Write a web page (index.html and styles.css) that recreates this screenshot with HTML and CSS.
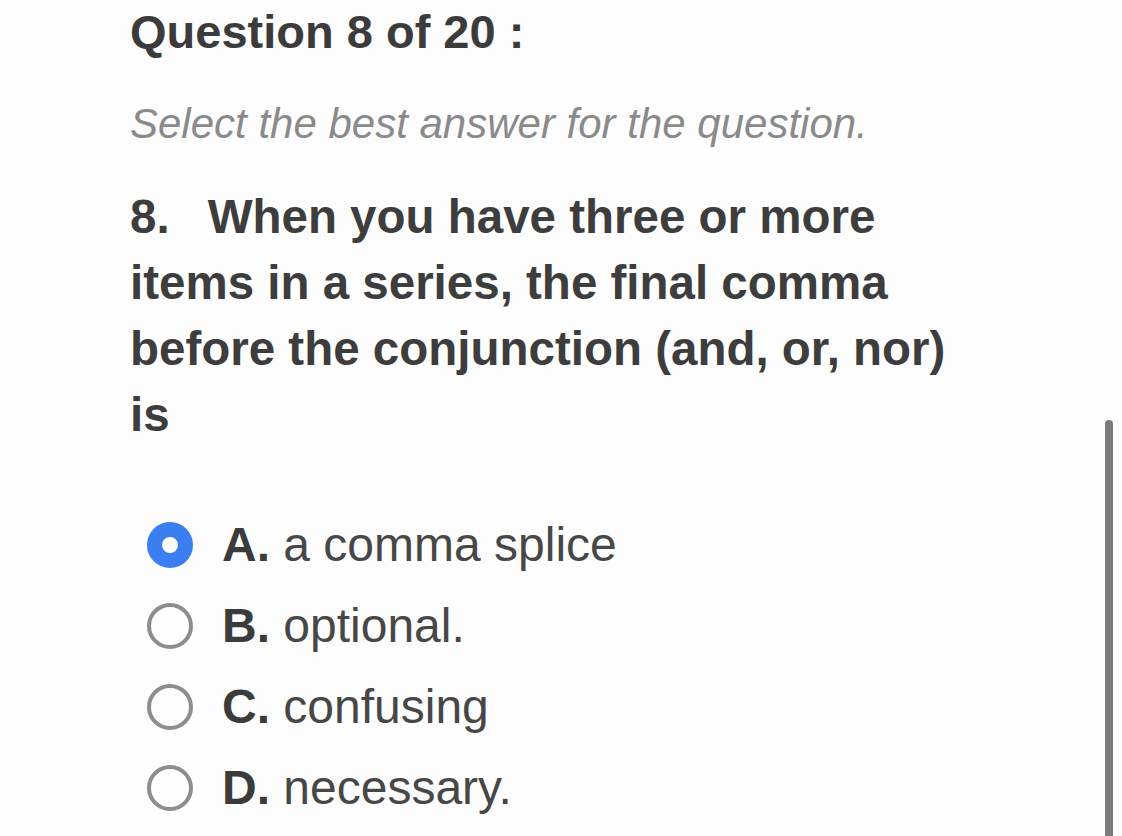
FILE: index.html
```html
<!DOCTYPE html>
<html lang="en">
<head>
<meta charset="utf-8">
<title>Question 8 of 20</title>
<link rel="stylesheet" href="styles.css">
</head>
<body>
<main class="quiz">
  <h1 class="title">Question 8 of 20 :</h1>
  <p class="hint">Select the best answer for the question.</p>
  <p class="question"><span class="qnum">8.</span>When you have three or more items in a series, the final comma before the conjunction (and, or, nor) is</p>
  <ul class="options">
    <li class="option"><span class="radio selected"></span><span class="label"><b>A.</b> a comma splice</span></li>
    <li class="option"><span class="radio"></span><span class="label"><b>B.</b> optional.</span></li>
    <li class="option"><span class="radio"></span><span class="label"><b>C.</b> confusing</span></li>
    <li class="option"><span class="radio"></span><span class="label"><b>D.</b> necessary.</span></li>
  </ul>
</main>
<div class="scrollbar"></div>
</body>
</html>
```

FILE: styles.css
```css
html, body {
  margin: 0;
  padding: 0;
  background: #fdfdfd;
  overflow: hidden;
}
body {
  font-family: "Liberation Sans", Arial, sans-serif;
  color: #3d3d3d;
}
.quiz {
  padding: 4px 0 0 130px;
  width: 840px;
}
.title {
  margin: 0;
  font-size: 47px;
  line-height: 56px;
  font-weight: 700;
  color: #3b3b3b;
}
.hint {
  margin: 39px 0 0;
  font-size: 42px;
  line-height: 50px;
  font-style: italic;
  color: #8a8a8a;
}
.question {
  margin: 35px 0 0;
  font-size: 47.5px;
  line-height: 66px;
  font-weight: 700;
  color: #3d3d3d;
}
.qnum {
  display: inline-block;
  margin-right: 38px;
}
.options {
  list-style: none;
  margin: 56px 0 0;
  padding: 0 0 0 17px;
}
.option {
  display: flex;
  align-items: center;
  height: 81px;
}
.radio {
  box-sizing: border-box;
  width: 46px;
  height: 46px;
  border-radius: 50%;
  border: 4px solid #8d8d8d;
  background: #fdfdfd;
  flex: none;
}
.radio.selected {
  border: 15px solid #3a7ef0;
  background: #ffffff;
}
.label {
  margin-left: 29px;
  font-size: 48px;
  line-height: 81px;
  color: #474747;
  white-space: nowrap;
}
.label b {
  font-weight: 700;
  color: #3b3b3b;
}
.scrollbar {
  position: fixed;
  left: 1105px;
  top: 420px;
  width: 8px;
  height: 430px;
  border-radius: 4px;
  background: #7b7b7b;
}
```
